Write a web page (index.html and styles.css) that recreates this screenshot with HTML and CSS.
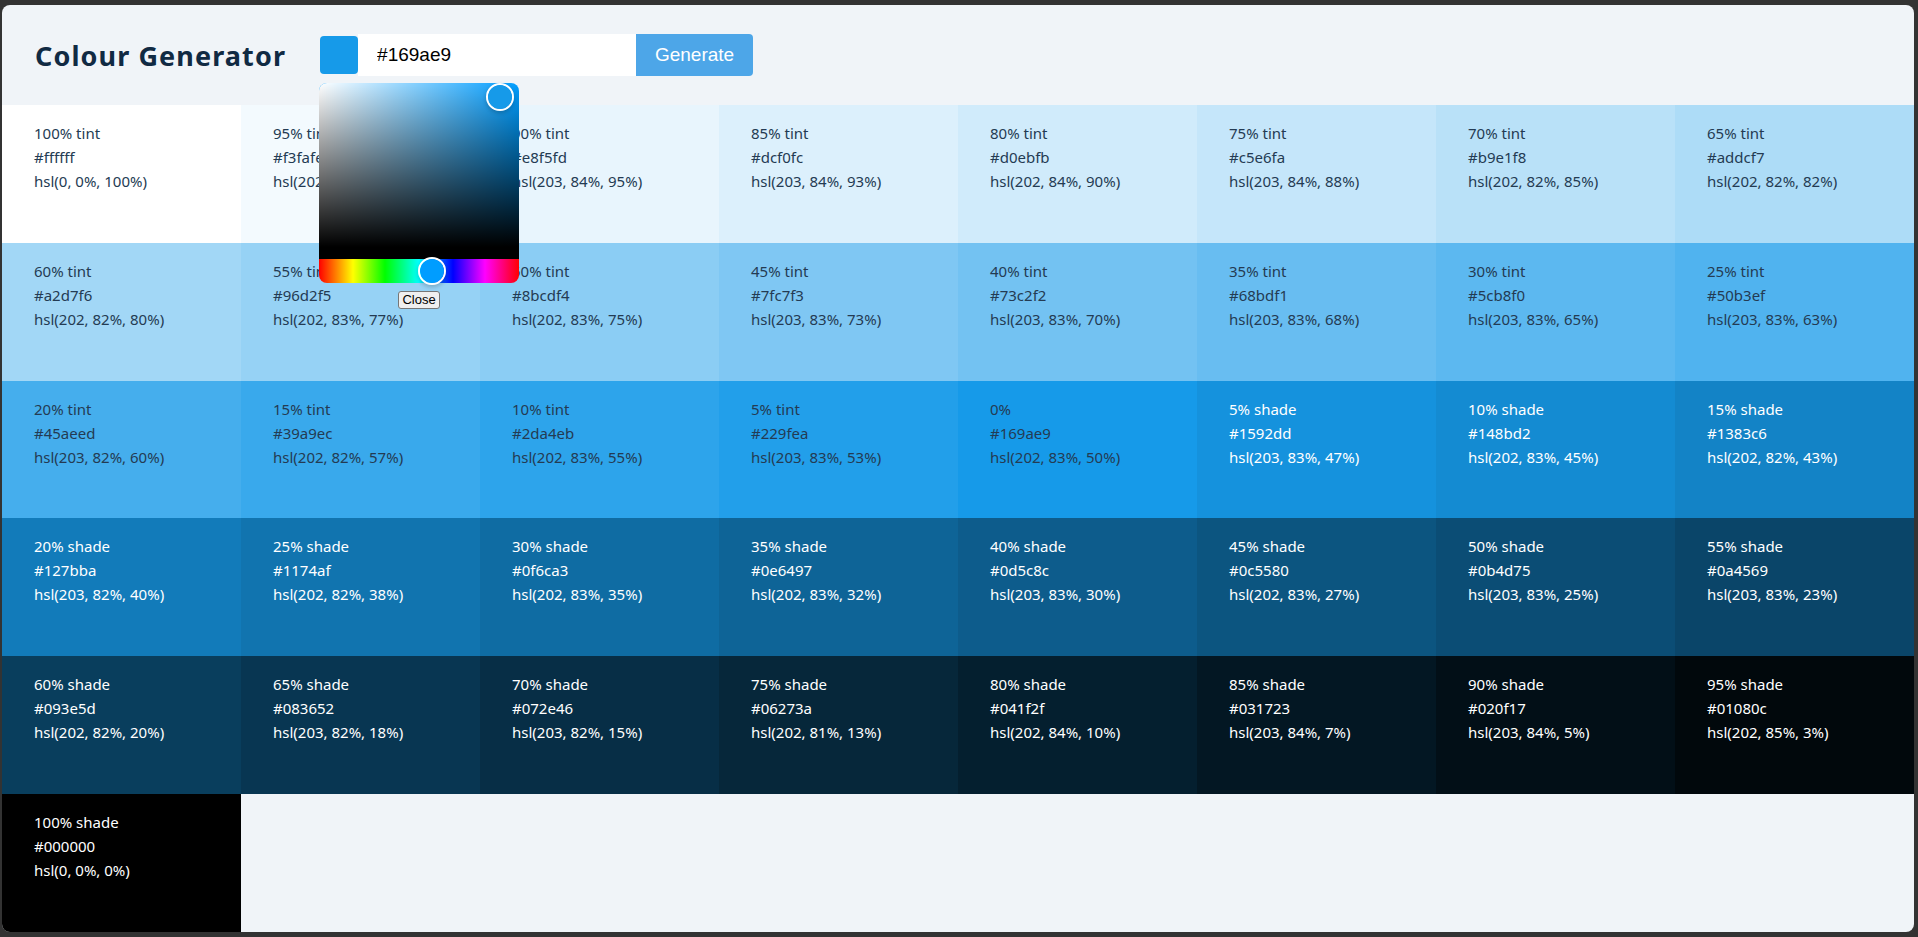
FILE: index.html
```html
<!DOCTYPE html>
<html lang="en">
<head>
<meta charset="utf-8">
<title>Colour Generator</title>
<link rel="stylesheet" href="styles.css">
</head>
<body>
<div class="window">
  <header class="topbar">
    <h1 class="title">Colour Generator</h1>
    <form class="gen-form">
      <div class="swatch-wrap">
        <div class="swatch"></div>
        <div class="popover">
          <div class="picker">
            <div class="saturation">
              <div class="pointer sat-pointer"><div class="pointer-fill"></div></div>
            </div>
            <div class="hue">
              <div class="pointer hue-pointer"><div class="pointer-fill"></div></div>
            </div>
          </div>
          <button type="button" class="close-btn">Close</button>
        </div>
      </div>
      <input class="hex-input" type="text" value="#169ae9">
      <button type="button" class="generate-btn">Generate</button>
    </form>
  </header>
  <main class="grid">
    <div class="cell dark" style="background:#ffffff"><p>100% tint</p><p>#ffffff</p><p>hsl(0, 0%, 100%)</p></div>
    <div class="cell dark" style="background:#f3fafe"><p>95% tint</p><p>#f3fafe</p><p>hsl(202, 85%, 97%)</p></div>
    <div class="cell dark" style="background:#e8f5fd"><p>90% tint</p><p>#e8f5fd</p><p>hsl(203, 84%, 95%)</p></div>
    <div class="cell dark" style="background:#dcf0fc"><p>85% tint</p><p>#dcf0fc</p><p>hsl(203, 84%, 93%)</p></div>
    <div class="cell dark" style="background:#d0ebfb"><p>80% tint</p><p>#d0ebfb</p><p>hsl(202, 84%, 90%)</p></div>
    <div class="cell dark" style="background:#c5e6fa"><p>75% tint</p><p>#c5e6fa</p><p>hsl(203, 84%, 88%)</p></div>
    <div class="cell dark" style="background:#b9e1f8"><p>70% tint</p><p>#b9e1f8</p><p>hsl(202, 82%, 85%)</p></div>
    <div class="cell dark" style="background:#addcf7"><p>65% tint</p><p>#addcf7</p><p>hsl(202, 82%, 82%)</p></div>

    <div class="cell dark" style="background:#a2d7f6"><p>60% tint</p><p>#a2d7f6</p><p>hsl(202, 82%, 80%)</p></div>
    <div class="cell dark" style="background:#96d2f5"><p>55% tint</p><p>#96d2f5</p><p>hsl(202, 83%, 77%)</p></div>
    <div class="cell dark" style="background:#8bcdf4"><p>50% tint</p><p>#8bcdf4</p><p>hsl(202, 83%, 75%)</p></div>
    <div class="cell dark" style="background:#7fc7f3"><p>45% tint</p><p>#7fc7f3</p><p>hsl(203, 83%, 73%)</p></div>
    <div class="cell dark" style="background:#73c2f2"><p>40% tint</p><p>#73c2f2</p><p>hsl(203, 83%, 70%)</p></div>
    <div class="cell dark" style="background:#68bdf1"><p>35% tint</p><p>#68bdf1</p><p>hsl(203, 83%, 68%)</p></div>
    <div class="cell dark" style="background:#5cb8f0"><p>30% tint</p><p>#5cb8f0</p><p>hsl(203, 83%, 65%)</p></div>
    <div class="cell dark" style="background:#50b3ef"><p>25% tint</p><p>#50b3ef</p><p>hsl(203, 83%, 63%)</p></div>

    <div class="cell dark" style="background:#45aeed"><p>20% tint</p><p>#45aeed</p><p>hsl(203, 82%, 60%)</p></div>
    <div class="cell dark" style="background:#39a9ec"><p>15% tint</p><p>#39a9ec</p><p>hsl(202, 82%, 57%)</p></div>
    <div class="cell dark" style="background:#2da4eb"><p>10% tint</p><p>#2da4eb</p><p>hsl(202, 83%, 55%)</p></div>
    <div class="cell dark" style="background:#229fea"><p>5% tint</p><p>#229fea</p><p>hsl(203, 83%, 53%)</p></div>
    <div class="cell dark" style="background:#169ae9"><p>0%</p><p>#169ae9</p><p>hsl(202, 83%, 50%)</p></div>
    <div class="cell light" style="background:#1592dd"><p>5% shade</p><p>#1592dd</p><p>hsl(203, 83%, 47%)</p></div>
    <div class="cell light" style="background:#148bd2"><p>10% shade</p><p>#148bd2</p><p>hsl(202, 83%, 45%)</p></div>
    <div class="cell light" style="background:#1383c6"><p>15% shade</p><p>#1383c6</p><p>hsl(202, 82%, 43%)</p></div>

    <div class="cell light" style="background:#127bba"><p>20% shade</p><p>#127bba</p><p>hsl(203, 82%, 40%)</p></div>
    <div class="cell light" style="background:#1174af"><p>25% shade</p><p>#1174af</p><p>hsl(202, 82%, 38%)</p></div>
    <div class="cell light" style="background:#0f6ca3"><p>30% shade</p><p>#0f6ca3</p><p>hsl(202, 83%, 35%)</p></div>
    <div class="cell light" style="background:#0e6497"><p>35% shade</p><p>#0e6497</p><p>hsl(202, 83%, 32%)</p></div>
    <div class="cell light" style="background:#0d5c8c"><p>40% shade</p><p>#0d5c8c</p><p>hsl(203, 83%, 30%)</p></div>
    <div class="cell light" style="background:#0c5580"><p>45% shade</p><p>#0c5580</p><p>hsl(202, 83%, 27%)</p></div>
    <div class="cell light" style="background:#0b4d75"><p>50% shade</p><p>#0b4d75</p><p>hsl(203, 83%, 25%)</p></div>
    <div class="cell light" style="background:#0a4569"><p>55% shade</p><p>#0a4569</p><p>hsl(203, 83%, 23%)</p></div>

    <div class="cell light" style="background:#093e5d"><p>60% shade</p><p>#093e5d</p><p>hsl(202, 82%, 20%)</p></div>
    <div class="cell light" style="background:#083652"><p>65% shade</p><p>#083652</p><p>hsl(203, 82%, 18%)</p></div>
    <div class="cell light" style="background:#072e46"><p>70% shade</p><p>#072e46</p><p>hsl(203, 82%, 15%)</p></div>
    <div class="cell light" style="background:#06273a"><p>75% shade</p><p>#06273a</p><p>hsl(202, 81%, 13%)</p></div>
    <div class="cell light" style="background:#041f2f"><p>80% shade</p><p>#041f2f</p><p>hsl(202, 84%, 10%)</p></div>
    <div class="cell light" style="background:#031723"><p>85% shade</p><p>#031723</p><p>hsl(203, 84%, 7%)</p></div>
    <div class="cell light" style="background:#020f17"><p>90% shade</p><p>#020f17</p><p>hsl(203, 84%, 5%)</p></div>
    <div class="cell light" style="background:#01080c"><p>95% shade</p><p>#01080c</p><p>hsl(202, 85%, 3%)</p></div>

    <div class="cell light" style="background:#000000"><p>100% shade</p><p>#000000</p><p>hsl(0, 0%, 0%)</p></div>
  </main>
</div>
</body>
</html>
```

FILE: styles.css
```css
* { box-sizing: border-box; }

html, body {
  margin: 0;
  height: 100%;
}

body {
  background: #333333;
  padding: 5px 4px 5px 2px;
  overflow: hidden;
}

.window {
  height: 927px;
  background: #f0f4f8;
  border-radius: 8px;
  overflow: hidden;
  display: flex;
  flex-direction: column;
}

.topbar {
  height: 100px;
  flex: 0 0 100px;
  display: flex;
  align-items: center;
  padding-left: 33px;
  position: relative;
  z-index: 2;
}

.title {
  margin: 0 34px 0 0;
  font-family: "Noto Sans", "Open Sans", sans-serif;
  font-weight: 700;
  font-size: 27px;
  letter-spacing: 1.1px;
  color: #102a43;
}

.gen-form {
  display: flex;
  align-items: center;
  height: 42px;
}

.swatch-wrap {
  position: relative;
  width: 38px;
  height: 38px;
}

.swatch {
  width: 38px;
  height: 38px;
  border-radius: 4px;
  background: #169ae9;
}

.popover {
  position: absolute;
  top: 47px;
  left: -1px;
  width: 200px;
  display: flex;
  flex-direction: column;
  align-items: center;
}

.picker {
  width: 200px;
  height: 200px;
  display: flex;
  flex-direction: column;
}

.saturation {
  position: relative;
  flex: 1 1 auto;
  border-bottom: 12px solid #000;
  border-radius: 8px 8px 0 0;
  background-color: hsl(203, 100%, 50%);
  background-image:
    linear-gradient(to top, #000, rgba(0, 0, 0, 0)),
    linear-gradient(to right, #fff, rgba(255, 255, 255, 0));
}

.hue {
  position: relative;
  height: 24px;
  flex: 0 0 24px;
  border-radius: 0 0 8px 8px;
  background: linear-gradient(to right, #f00 0, #ff0 17%, #0f0 33%, #0ff 50%, #00f 67%, #f0f 83%, #f00 100%);
}

.pointer {
  position: absolute;
  width: 28px;
  height: 28px;
  border: 2px solid #fff;
  border-radius: 50%;
  transform: translate(-50%, -50%);
  box-shadow: 0 2px 4px rgba(0, 0, 0, 0.2);
  overflow: hidden;
}

.pointer-fill {
  width: 100%;
  height: 100%;
  border-radius: 50%;
}

.sat-pointer {
  left: 90.6%;
  top: 8.6%;
}

.sat-pointer .pointer-fill { background: #169ae9; }

.hue-pointer {
  left: 56.3%;
  top: 50%;
}

.hue-pointer .pointer-fill { background: hsl(203, 100%, 50%); }

.close-btn {
  margin-top: 8px;
  font-family: "Liberation Sans", Arial, sans-serif;
  font-size: 13px;
  height: 18px;
  padding: 0 3px;
  line-height: 16px;
  color: #000;
  background: #efefef;
  border: 1px solid #767676;
  border-radius: 3px;
}

.hex-input {
  width: 278px;
  height: 42px;
  border: none;
  outline: none;
  background: #fff;
  padding: 0 0 0 19px;
  font-family: "Liberation Sans", Arial, sans-serif;
  font-size: 19px;
  color: #000;
}

.generate-btn {
  width: 117px;
  height: 42px;
  border: none;
  border-radius: 0 4px 4px 0;
  background: #4da6e8;
  color: #fff;
  font-family: "Liberation Sans", Arial, sans-serif;
  font-size: 19px;
  padding: 0;
}

.grid {
  flex: 1 1 auto;
  display: grid;
  grid-template-columns: repeat(8, 1fr);
  grid-template-rows: repeat(6, 1fr);
  position: relative;
  z-index: 1;
}

.cell {
  padding: 16px 32px 0 32px;
  font-family: "Noto Sans", "Open Sans", sans-serif;
  font-size: 15px;
  line-height: 24px;
}

.cell p { margin: 0; }

.cell.dark { color: #243b53; }
.cell.light { color: #ffffff; }
```
